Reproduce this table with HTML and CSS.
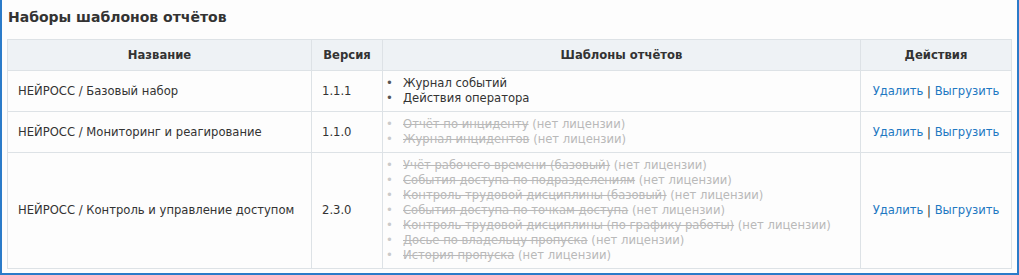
FILE: index.html
```html
<!DOCTYPE html>
<html lang="ru">
<head>
  <meta charset="UTF-8" />
  <title>Наборы шаблонов отчётов</title>
  <link rel="stylesheet" href="styles.css">
</head>
<body>
  <div class="panel">
    <h2 class="panel-title">Наборы шаблонов отчётов</h2>
    <table class="sets">
      <colgroup>
        <col class="col-name">
        <col class="col-ver">
        <col class="col-tpl">
        <col class="col-act">
      </colgroup>
      <thead>
        <tr>
          <th>Название</th>
          <th>Версия</th>
          <th>Шаблоны отчётов</th>
          <th>Действия</th>
        </tr>
      </thead>
      <tbody>
        <tr>
          <td>НЕЙРОСС / Базовый набор</td>
          <td>1.1.1</td>
          <td class="tpl-cell">
            <ul class="tpl">
              <li>Журнал событий</li>
              <li>Действия оператора</li>
            </ul>
          </td>
          <td class="act"><a href="#">Удалить</a> | <a href="#">Выгрузить</a></td>
        </tr>
        <tr>
          <td>НЕЙРОСС / Мониторинг и реагирование</td>
          <td>1.1.0</td>
          <td class="tpl-cell">
            <ul class="tpl">
              <li class="off"><s>Отчёт по инциденту</s> (нет лицензии)</li>
              <li class="off"><s>Журнал инцидентов</s> (нет лицензии)</li>
            </ul>
          </td>
          <td class="act"><a href="#">Удалить</a> | <a href="#">Выгрузить</a></td>
        </tr>
        <tr>
          <td>НЕЙРОСС / Контроль и управление доступом</td>
          <td>2.3.0</td>
          <td class="tpl-cell">
            <ul class="tpl">
              <li class="off"><s>Учёт рабочего времени (базовый)</s> (нет лицензии)</li>
              <li class="off"><s>События доступа по подразделениям</s> (нет лицензии)</li>
              <li class="off"><s>Контроль трудовой дисциплины (базовый)</s> (нет лицензии)</li>
              <li class="off"><s>События доступа по точкам доступа</s> (нет лицензии)</li>
              <li class="off"><s>Контроль трудовой дисциплины (по графику работы)</s> (нет лицензии)</li>
              <li class="off"><s>Досье по владельцу пропуска</s> (нет лицензии)</li>
              <li class="off"><s>История пропуска</s> (нет лицензии)</li>
            </ul>
          </td>
          <td class="act"><a href="#">Удалить</a> | <a href="#">Выгрузить</a></td>
        </tr>
      </tbody>
    </table>
  </div>
</body>
</html>
```

FILE: styles.css
```css
* { box-sizing: border-box; margin: 0; padding: 0; }

body {
  font-family: "DejaVu Sans", Verdana, sans-serif;
  font-size: 11.6px;
  color: #333;
  background: #fff;
}

.panel {
  width: 1019px;
  border: 2px solid #2b7bc9;
  border-top: none;
  background: #fdfdfd;
  padding: 0 6px 4px 5px;
}

.panel-title {
  font-size: 14px;
  font-weight: bold;
  line-height: 20px;
  padding: 7px 1px 12px;
  color: #333;
}

.sets {
  width: 1004px;
  border-collapse: collapse;
  table-layout: fixed;
}

.col-name { width: 304px; }
.col-ver { width: 71px; }
.col-tpl { width: 478px; }
.col-act { width: 151px; }

.sets th,
.sets td {
  border: 1px solid #dde2e6;
  line-height: 15px;
  padding: 5px 10px;
  vertical-align: middle;
  text-align: left;
}

.sets th {
  background: #eef2f5;
  font-weight: bold;
  text-align: center;
  padding: 8px 10px 7px;
}

.sets td.tpl-cell { padding-left: 3px; }

.tpl { list-style: none; }

.tpl li::before {
  content: "•";
  display: inline-block;
  width: 17px;
  color: #555;
}

.tpl .off { color: #b9b9b9; }
.tpl .off::before { color: #cacaca; }

.sets td.act { text-align: center; }

.act a {
  color: #1e78c2;
  text-decoration: none;
}
```
